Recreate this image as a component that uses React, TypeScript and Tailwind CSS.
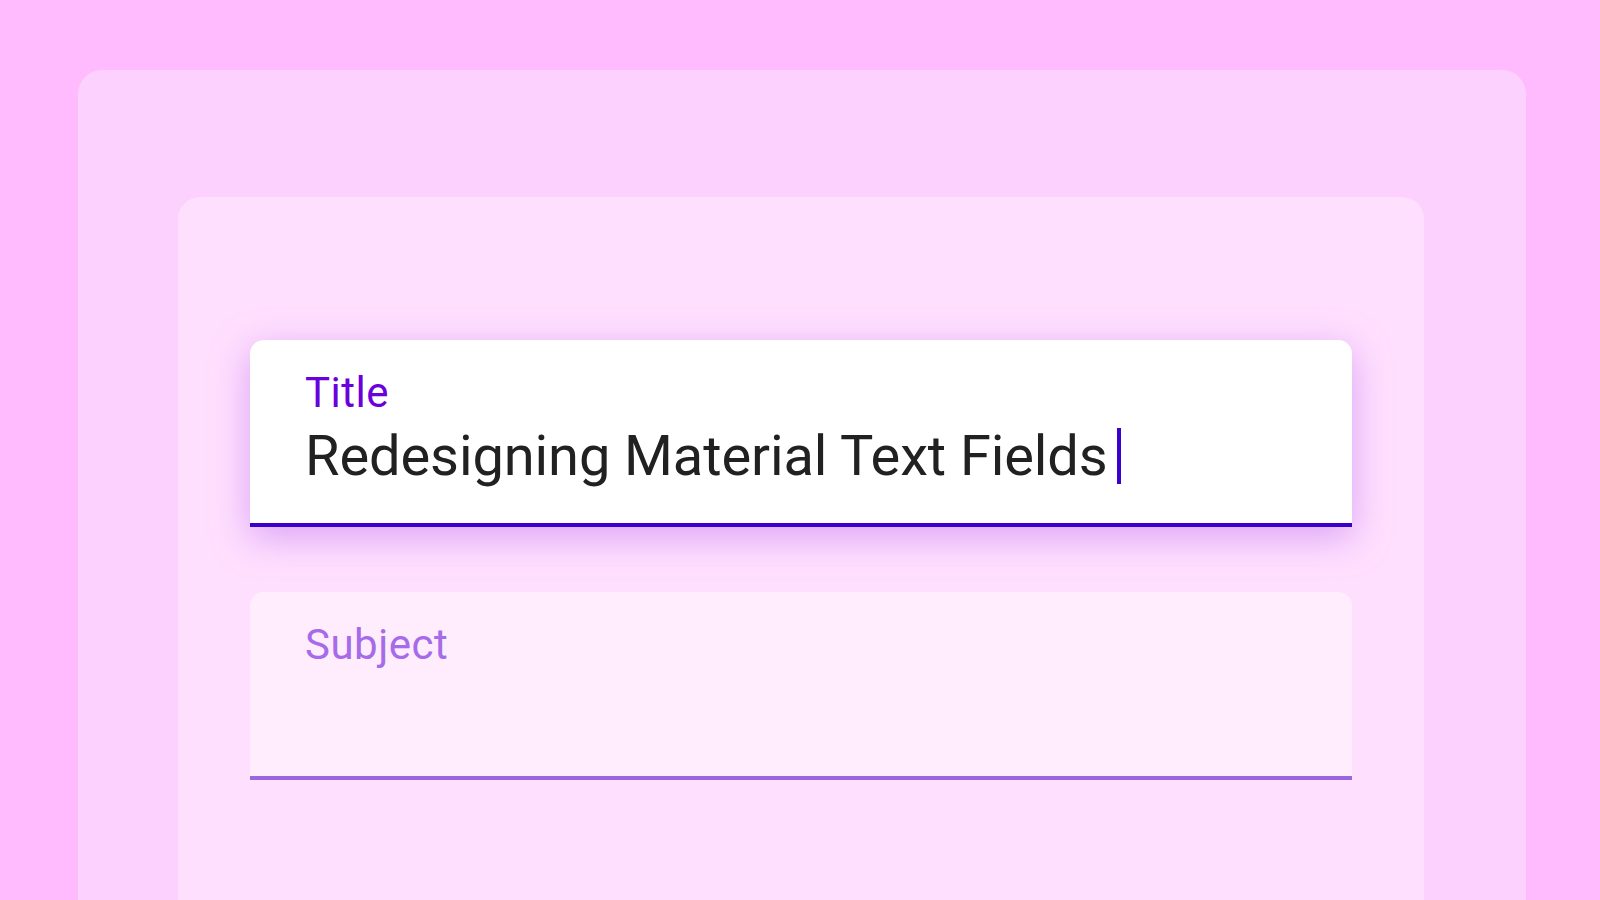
import React from "react";

export default function App() {
  return (
    <div
      className="w-[1600px] h-[900px] overflow-hidden bg-[#ffbbfd] pt-[70px] pl-[78px]"
      style={{ fontFamily: "Roboto, 'Noto Sans', sans-serif" }}
    >
      <div className="w-[1448px] h-[900px] rounded-[24px] bg-[#fdd1fd] pt-[127px] pl-[100px]">
        <div className="w-[1246px] h-[800px] rounded-[22px] bg-[#ffdffe] pt-[143px] px-[72px]">
          <div className="flex flex-col gap-[65px]">
            <div className="bg-white rounded-t-[14px] border-b-[4px] border-[#3a00cc] pl-[55px] pt-[32px] pb-[39px] shadow-[0_10px_36px_rgba(184,104,240,0.5)]">
              <div className="text-[42px] leading-[42px] text-[#6a00dc] tracking-[0.5px]">Title</div>
              <div className="mt-[14px] flex items-stretch h-[56px]">
                <span className="text-[56px] leading-[56px] text-[#212121] tracking-[-0.1px]">
                  Redesigning Material Text Fields
                </span>
                <span className="ml-[9px] w-[4px] bg-[#3a00d0]" />
              </div>
            </div>
            <div className="bg-[#ffedfe] rounded-t-[14px] border-b-[4px] border-[#9966e0] pl-[55px] pt-[32px] pb-[40px]">
              <div className="text-[42px] leading-[42px] text-[#a66be8] tracking-[0.5px]">Subject</div>
              <div className="mt-[14px] h-[56px]" />
            </div>
          </div>
        </div>
      </div>
    </div>
  );
}
